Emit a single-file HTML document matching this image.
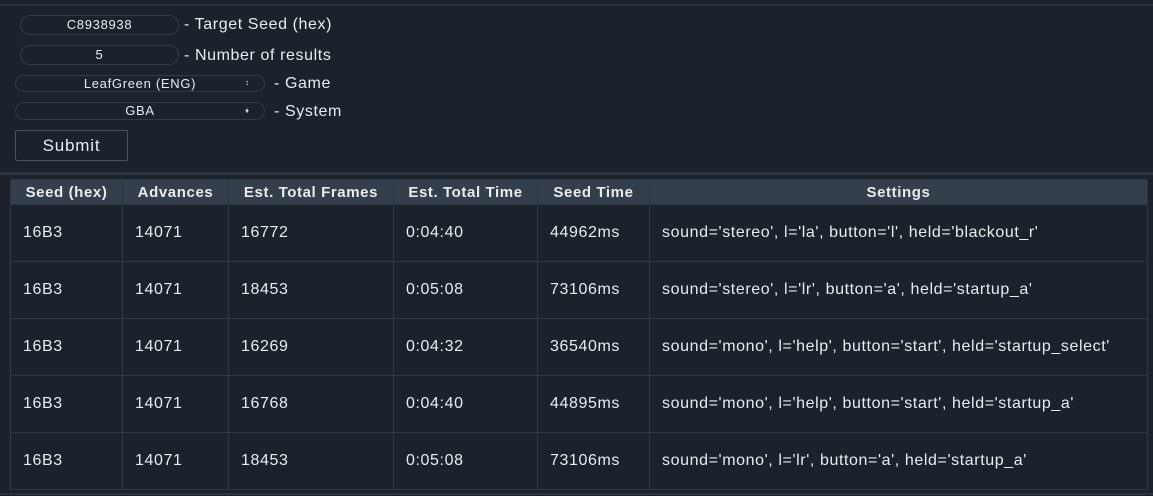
<!DOCTYPE html>
<html><head><style>
body{margin:0;width:1153px;height:496px;background:#1b222c;overflow:hidden;font-family:"Liberation Sans",sans-serif;color:#e8ecef;position:relative}
.ln{position:absolute;left:0;width:1153px;height:2px;background:#2a333e}
.inp{position:absolute;border:1px solid #323c47;border-radius:10px;color:#e8ecef;font-size:13px;letter-spacing:0.7px;text-align:center;box-sizing:border-box}
.lbl{position:absolute;font-size:16px;letter-spacing:0.6px;color:#e8ecef}
.btn{position:absolute;left:15px;top:130px;width:113px;height:31px;border:1px solid #4a535d;border-radius:2px;box-sizing:border-box;font-size:17px;letter-spacing:0.8px;text-align:center;line-height:29px}
table{position:absolute;left:10px;top:179px;border-collapse:collapse;font-size:16px;letter-spacing:0.6px;table-layout:fixed}
th{background:#343f4b;height:24px;padding:0;font-weight:bold;font-size:15px;letter-spacing:0.6px;border:1px solid #2b3540;text-align:center}
td{height:56px;padding:0 0 0 12px;border:1px solid #2f3a45;text-align:left;white-space:nowrap}
.arr{position:absolute;font-size:8px;color:#ccc}
</style></head><body>
<div class="ln" style="top:4px"></div>
<div class="ln" style="top:172px;height:3px"></div>
<div class="ln" style="top:493px"></div>
<div class="inp" style="left:20px;top:15px;width:159px;height:20px;line-height:18px">C8938938</div>
<div class="lbl" style="left:184px;top:16px">- Target Seed (hex)</div>
<div class="inp" style="left:20px;top:45px;width:159px;height:20px;line-height:18px">5</div>
<div class="lbl" style="left:184px;top:47px">- Number of results</div>
<div class="inp" style="left:15px;top:75px;width:250px;height:17px;line-height:15px">LeafGreen (ENG)</div>
<div class="arr" style="left:245px;top:78px">↕</div>
<div class="lbl" style="left:274px;top:75px">- Game</div>
<div class="inp" style="left:15px;top:102px;width:250px;height:18px;line-height:16px">GBA</div>
<div class="arr" style="left:245px;top:106px">♦</div>
<div class="lbl" style="left:274px;top:103px">- System</div>
<div class="btn">Submit</div>
<table>
<tr><th style="width:111px">Seed (hex)</th><th style="width:105px">Advances</th><th style="width:164px">Est. Total Frames</th><th style="width:143px">Est. Total Time</th><th style="width:111px">Seed Time</th><th style="width:497px">Settings</th></tr>
<tr><td>16B3</td><td>14071</td><td>16772</td><td>0:04:40</td><td>44962ms</td><td>sound='stereo', l='la', button='l', held='blackout_r'</td></tr>
<tr><td>16B3</td><td>14071</td><td>18453</td><td>0:05:08</td><td>73106ms</td><td>sound='stereo', l='lr', button='a', held='startup_a'</td></tr>
<tr><td>16B3</td><td>14071</td><td>16269</td><td>0:04:32</td><td>36540ms</td><td>sound='mono', l='help', button='start', held='startup_select'</td></tr>
<tr><td>16B3</td><td>14071</td><td>16768</td><td>0:04:40</td><td>44895ms</td><td>sound='mono', l='help', button='start', held='startup_a'</td></tr>
<tr><td>16B3</td><td>14071</td><td>18453</td><td>0:05:08</td><td>73106ms</td><td>sound='mono', l='lr', button='a', held='startup_a'</td></tr>
</table>
</body></html>
